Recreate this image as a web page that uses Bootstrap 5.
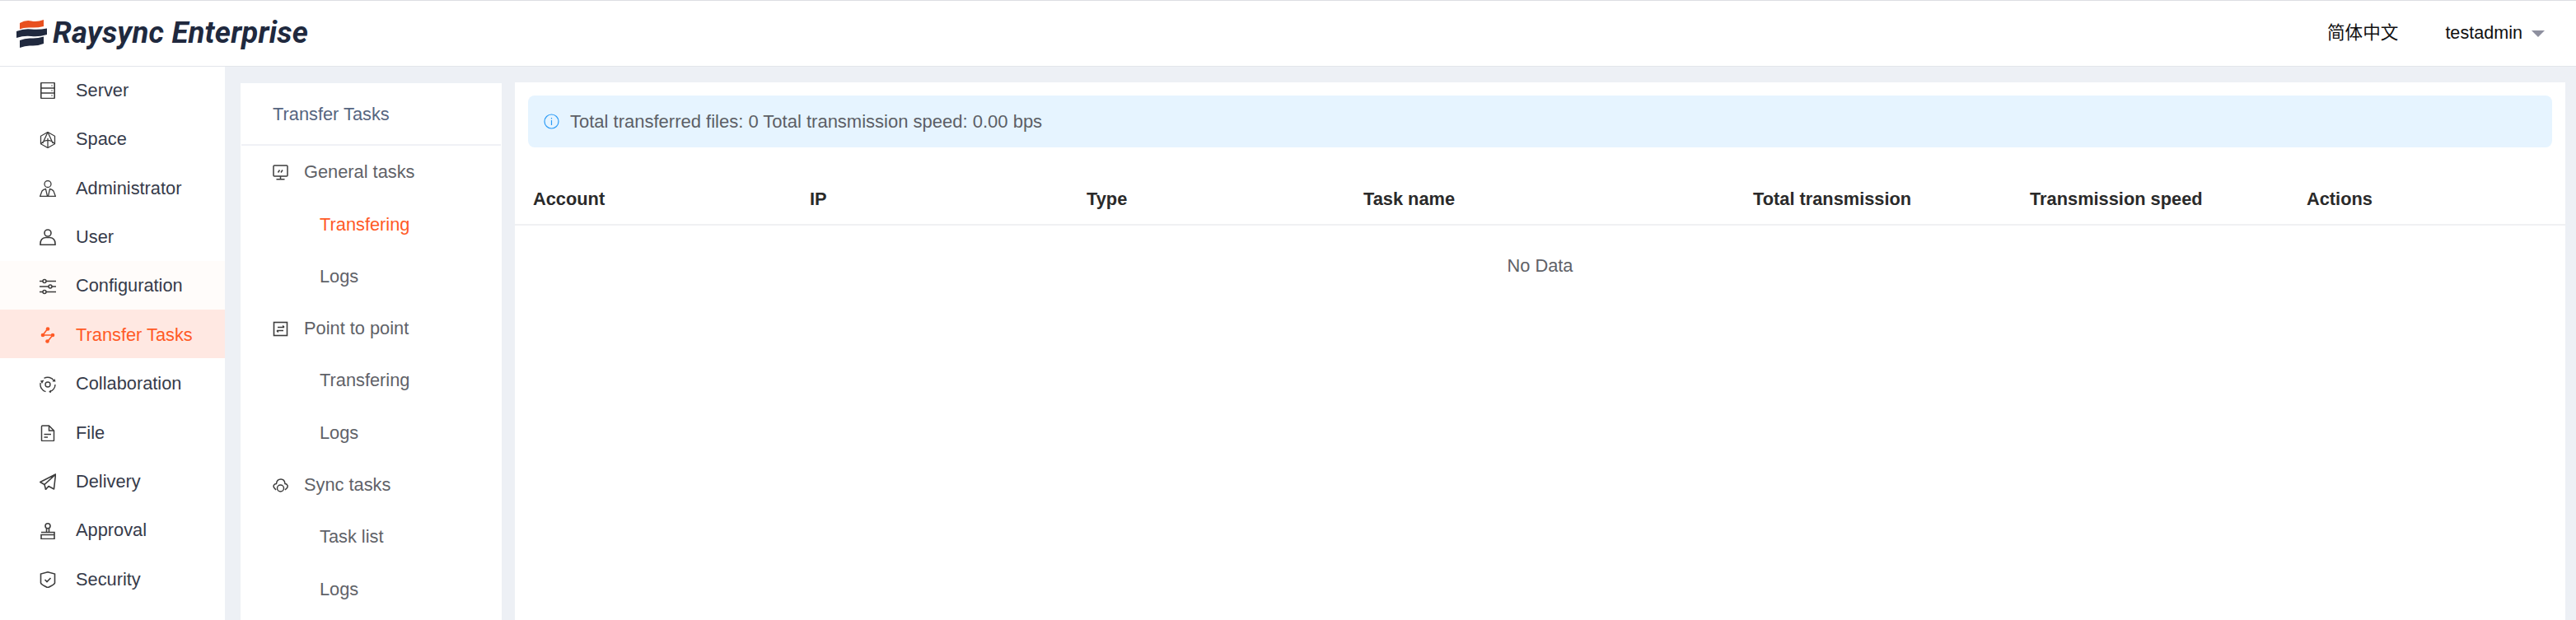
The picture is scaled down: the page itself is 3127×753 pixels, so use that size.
<!DOCTYPE html>
<html lang="en"><head><meta charset="utf-8"><title>Raysync Enterprise</title>
<link href="https://cdn.jsdelivr.net/npm/bootstrap@5.3.0/dist/css/bootstrap.min.css" rel="stylesheet">
<style>
html,body{height:100%;overflow:hidden}
body{font-family:"Liberation Sans","Noto Sans CJK SC",sans-serif;font-size:21.8px;background:#edf0f5;color:#363b4a}
.app-top{height:81px;background:#fff;border-top:1px solid #dcdde2;border-bottom:1px solid #e3e5ea;padding:0 38px 0 20px}
.brand-mark{width:37px;height:34px;flex:none}
.brand-name{font-family:"Roboto",sans-serif;font-style:italic;font-weight:700;font-size:36.6px;letter-spacing:.2px;color:#20293e;margin-left:7px;line-height:1}
.top-link{color:#111;font-size:21.6px}
.top-lang{margin-right:57px}
.top-caret{width:0;height:0;border:8px solid transparent;border-top-color:#8e909f;border-bottom:0;margin-left:11px;margin-top:2px}
.app-body{height:672px;overflow:hidden}
.side-menu{width:273px;flex:none;background:#fff;overflow:hidden}
.side-inner{margin-top:-2px}
.side-item{height:59.4px;padding:3px 0 0 48px;color:#363b4a;gap:24px;text-decoration:none}
.side-item svg{width:20px;height:20px;flex:none}
.side-hover{background:#fffcfa;color:#363b4a}
.side-active{background:#ffe8e2;color:#ff5a26}
.sub-panel{width:317px;flex:none;margin:20px 16px 0 19px;background:#fff;overflow:hidden}
.sub-title{height:76px;padding:3px 0 0 38px;color:#56657f;border-bottom:2px solid #f0f1f6;margin:0 1px}
.sub-stack{padding-top:1px}
.sub-group{height:63.3px;padding-left:39px;color:#5f6268;gap:19px;text-decoration:none}
.sub-group svg{width:19px;height:19px;flex:none}
.sub-leaf{height:63.3px;padding-left:96px;color:#5f6268;text-decoration:none}
.sub-on{color:#ff5a26}
.main-pane{width:2489px;flex:none;margin-top:19px;background:#fff;overflow:hidden}
.note-bar{margin:16px 16px 0;height:63px;background:#e6f4ff;border-radius:8px;padding-left:19px;gap:13px;color:#5c5f66;font-size:22px}
.note-bar svg{width:19px;height:19px;flex:none}
.task-table{table-layout:fixed;width:100%;margin:31px 0 0}
.task-table th{height:63px;padding:3px 0 0 22px;font-weight:700;color:#2a2a2a;border-bottom:2px solid #f0f1f3;vertical-align:middle;background:#fff}
.task-table td{height:98px;text-align:center;color:#5f6268;border:0;padding:1px 0 0;background:#fff;vertical-align:middle}
.w-std{width:336px}.w-name{width:473px}.w-last{width:336px}
</style></head><body>
<header class="app-top d-flex align-items-center justify-content-between">
  <div class="d-flex align-items-center">
    <svg class="brand-mark" viewBox="0 0 37 34"><path d="M4 4Q11 0 18 1.500Q25 3 33 0V8Q25 10 18 9.500Q9 9 4 11.500Z" fill="#e8501f"/><path d="M0 14Q9 10.500 18 11.500Q27 12.500 37 10.500V18Q27 21 18 20Q9 19 0 22Z" fill="#20293e"/><path d="M4 25Q11 22 18 22.500Q25 23 33 20.500V29Q25 32 18 31.500Q11 31 4 34Z" fill="#20293e"/></svg>
    <span class="brand-name">Raysync Enterprise</span>
  </div>
  <div class="d-flex align-items-center top-link">
    <span class="top-lang">简体中文</span><span>testadmin</span><span class="top-caret"></span>
  </div>
</header>
<div class="app-body d-flex">
  <nav class="side-menu"><div class="side-inner d-flex flex-column">
    <a class="side-item d-flex align-items-center" href="#"><svg viewBox="0 0 20 20" fill="none" stroke="#3d3d3d" stroke-width="1.600"><rect x="1.800" y=".5" width="16.400" height="19" rx="1"/><path d="M2 7H18M2 13H18M14.500 4H15.500M14.500 10H15.500M14.500 16H15.500"/></svg>Server</a>
    <a class="side-item d-flex align-items-center" href="#"><svg viewBox="0 0 20 20" fill="none" stroke="#3d3d3d" stroke-width="1.300"><path d="M10 .5L18.500 5.300V14.700L10 19.500L1.500 14.700V5.300Z"/><path d="M10 .5L3.800 14M10 .5L16.200 14M1.500 14.700Q10 6 18.500 14.700M10 8V19.500"/></svg>Space</a>
    <a class="side-item d-flex align-items-center" href="#"><svg viewBox="0 0 20 20" fill="none" stroke="#3d3d3d" stroke-width="1.300"><circle cx="10" cy="4.500" r="4"/><path d="M.7 19.300L3 13Q4.500 11 7.500 10.500L9.500 19.300ZM19.300 19.300L17 13Q15.500 11 12.500 10.500L10.500 19.300Z"/></svg>Administrator</a>
    <a class="side-item d-flex align-items-center" href="#"><svg viewBox="0 0 20 20" fill="none" stroke="#3d3d3d" stroke-width="1.600"><circle cx="10" cy="5" r="4"/><path d="M1 19.300H19Q19.500 11 12.500 10.500H7.500Q.5 11 1 19.300Z"/></svg>User</a>
    <a class="side-item side-hover d-flex align-items-center" href="#"><svg viewBox="0 0 20 20" fill="none" stroke="#3d3d3d" stroke-width="1.500"><path d="M0 3.500H4M8 3.500H20M0 10H11M15 10H20M0 16.500H4M8 16.500H20"/><circle cx="6" cy="3.500" r="2"/><circle cx="13" cy="10" r="2"/><circle cx="6" cy="16.500" r="2"/></svg>Configuration</a>
    <a class="side-item side-active d-flex align-items-center" href="#"><svg viewBox="0 0 20 20" fill="none" stroke="#ff5a26" stroke-width="1.600"><path d="M10 2L4 10H16L9.500 18"/><g fill="#ff5a26" stroke="none"><circle cx="10" cy="2.500" r="2.300"/><circle cx="4" cy="10" r="2.300"/><circle cx="16" cy="10" r="2.300"/><circle cx="9.500" cy="17.500" r="2.300"/></g></svg>Transfer Tasks</a>
    <a class="side-item d-flex align-items-center" href="#"><svg viewBox="0 0 20 20" fill="none" stroke="#3d3d3d" stroke-width="1.400"><circle cx="10" cy="10" r="3"/><path d="M5.500 2.300A9 9 0 0 1 17.500 5.500M19 10A9 9 0 0 1 12 18.800M7.500 18.700A9 9 0 0 1 1.200 8"/><path d="M15.500 6.500L19.500 6.500L18.500 3ZM14 16.500L11 19L14 20ZM1 5.500L3 9L5.500 4.500Z" fill="#3d3d3d" stroke="none"/></svg>Collaboration</a>
    <a class="side-item d-flex align-items-center" href="#"><svg viewBox="0 0 20 20" fill="none" stroke="#3d3d3d" stroke-width="1.500"><path d="M3.500 1Q2.500 1 2.500 2V18.500Q2.500 19.500 3.500 19.500H16.500Q17.500 19.500 17.500 18.500V7L11.500 1ZM11.500 1V7H17.500M5.500 11.500H14M5.500 15H10"/></svg>File</a>
    <a class="side-item d-flex align-items-center" href="#"><svg viewBox="0 0 20 20" fill="none" stroke="#3d3d3d" stroke-width="1.600" stroke-linejoin="round"><path d="M19.500 1L.8 10.500L6 13.500L19.500 1L17.500 19L11 15.500L7.500 19.500L6 13.500"/></svg>Delivery</a>
    <a class="side-item d-flex align-items-center" href="#"><svg viewBox="0 0 20 20" fill="none" stroke="#3d3d3d" stroke-width="1.600"><circle cx="10" cy="3.800" r="3"/><path d="M8.500 6.500V11.500M11.500 6.500V11.500M2 11.500H18V14.500H2V19.500H18V14.500"/></svg>Approval</a>
    <a class="side-item d-flex align-items-center" href="#"><svg viewBox="0 0 20 20" fill="none" stroke="#3d3d3d" stroke-width="1.600"><path d="M10 .8L18.500 3V14Q18 16 10 19.800Q2 16 1.500 14V3ZM6.500 10L9 12.500L13.500 8"/></svg>Security</a>
    <a class="side-item d-flex align-items-center" href="#"><svg viewBox="0 0 20 20" fill="none" stroke="#3d3d3d" stroke-width="1.600"><path d="M3 16V9A7 7 0 0 1 17 9V16H3ZM1 16H19"/></svg>Notification</a>
  </div></nav>
  <aside class="sub-panel">
    <div class="sub-title d-flex align-items-center">Transfer Tasks</div>
    <div class="sub-stack d-flex flex-column">
      <a class="sub-group d-flex align-items-center" href="#"><svg viewBox="0 0 19 19" fill="none" stroke="#3d3d3d" stroke-width="1.500"><rect x="1" y="1" width="17" height="13" rx="1"/><path d="M9.500 14V17.500M4.500 17.800H14.500M6.500 9.500L8.500 6.500M10 9.500L12 6.500"/></svg>General tasks</a>
      <a class="sub-leaf sub-on d-flex align-items-center" href="#">Transfering</a>
      <a class="sub-leaf d-flex align-items-center" href="#">Logs</a>
      <a class="sub-group d-flex align-items-center" href="#"><svg viewBox="0 0 19 19" fill="none" stroke="#3d3d3d" stroke-width="1.600"><rect x="1.500" y="1.500" width="16" height="16"/><path d="M6 7.500H14M14 7.500L12.200 5.500M13 11.500H5M5 11.500L6.800 13.500"/></svg>Point to point</a>
      <a class="sub-leaf d-flex align-items-center" href="#">Transfering</a>
      <a class="sub-leaf d-flex align-items-center" href="#">Logs</a>
      <a class="sub-group d-flex align-items-center" href="#"><svg viewBox="0 0 19 19" fill="none" stroke="#3d3d3d" stroke-width="1.500"><path d="M4 15L1.500 12Q.5 10 2 8.500Q3 7.500 4.500 7.500Q5 2 10 2Q14.500 2 15 7.500Q17 7.500 18 9.500Q18.500 11 17.500 12.500L15 15"/><circle cx="9.500" cy="13" r="4"/></svg>Sync tasks</a>
      <a class="sub-leaf d-flex align-items-center" href="#">Task list</a>
      <a class="sub-leaf d-flex align-items-center" href="#">Logs</a>
    </div>
  </aside>
  <main class="main-pane">
    <div class="note-bar d-flex align-items-center"><svg viewBox="0 0 19 19" fill="none" stroke="#2d9cf6" stroke-width="1.200"><circle cx="9.500" cy="9.500" r="8.500"/><path d="M9.500 8V14M9.500 5V6.400"/></svg>Total transferred files: 0 Total transmission speed: 0.00 bps</div>
    <table class="table task-table">
      <colgroup><col class="w-std"><col class="w-std"><col class="w-std"><col class="w-name"><col class="w-std"><col class="w-std"><col class="w-last"></colgroup>
      <thead><tr><th>Account</th><th>IP</th><th>Type</th><th>Task name</th><th>Total transmission</th><th>Transmission speed</th><th>Actions</th></tr></thead>
      <tbody><tr><td colspan="7">No Data</td></tr></tbody>
    </table>
  </main>
</div>
<script src="https://cdn.jsdelivr.net/npm/bootstrap@5.3.0/dist/js/bootstrap.bundle.min.js"></script>
</body></html>
